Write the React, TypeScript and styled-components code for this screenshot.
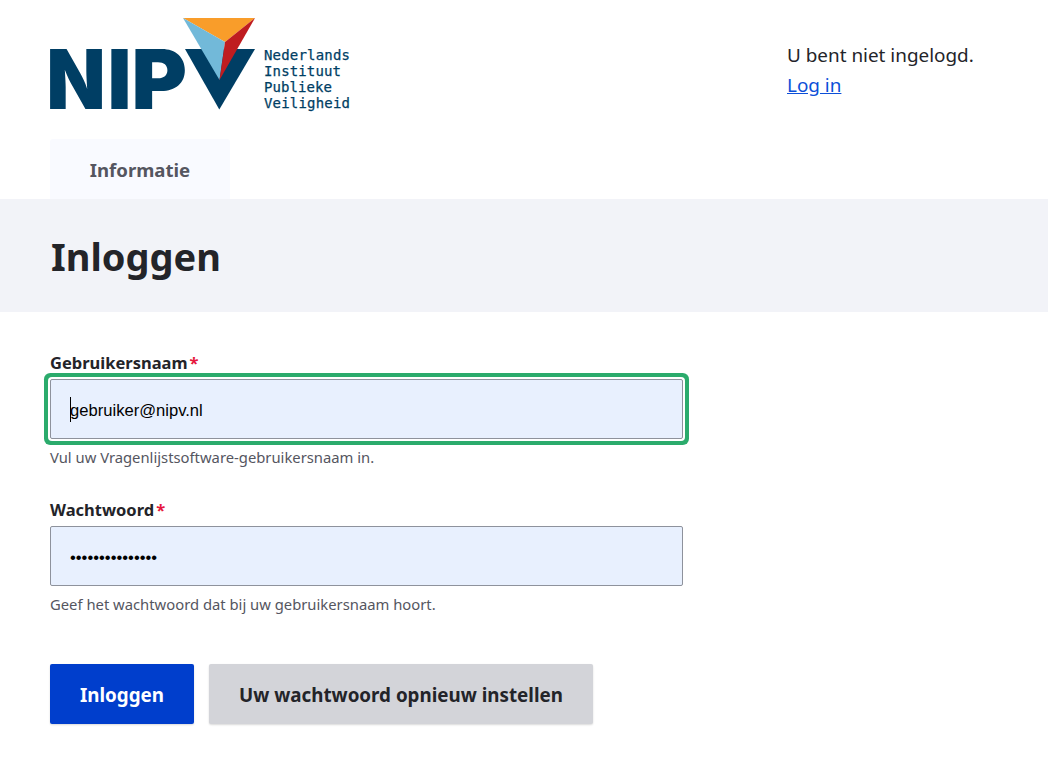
import styled, { createGlobalStyle } from 'styled-components'

const GlobalStyle = createGlobalStyle`
  html, body { margin: 0; padding: 0; background: #fff; }
  body { font-family: "Noto Sans", Arial, sans-serif; color: #232429; }
`

const Page = styled.div`
  width: 1048px;
  height: 768px;
  overflow: hidden;
`

const Header = styled.header`
  display: grid;
  grid-template-columns: 737px auto;
  padding: 18px 50px 0;
  height: 139px;
  box-sizing: border-box;
`

const UserBlock = styled.div`
  padding-top: 22px;
  font-size: 18.9px;
  line-height: 30px;
`

const UserLink = styled.a`
  display: block;
  color: #0b4fd8;
  text-decoration: underline;
`

const Tabs = styled.nav`
  display: flex;
  padding-left: 50px;
`

const Tab = styled.a`
  width: 180px;
  height: 60px;
  display: flex;
  align-items: center;
  justify-content: center;
  background: #f9faff;
  border-radius: 3px 3px 0 0;
  color: #55565f;
  font-weight: 700;
  font-size: 18.6px;
`

const TitleBand = styled.div`
  height: 113px;
  padding: 3px 0 0 51px;
  box-sizing: border-box;
  display: flex;
  align-items: center;
  background: #f2f3f8;
`

const Title = styled.h1`
  margin: 0;
  font-size: 38px;
  font-weight: 700;
  line-height: 1.2;
  color: #232429;
`

const Form = styled.form`
  padding: 39px 0 0 50px;
  width: 633px;
`

const Field = styled.div`
  margin-bottom: 31px;
`

const Label = styled.label`
  display: block;
  font-size: 16.5px;
  font-weight: 700;
  line-height: 24px;
  margin-bottom: 4px;
  color: #232429;
`

const Required = styled.span`
  color: #e6173d;
  margin-left: 2px;
`

const InputWrap = styled.div`
  position: relative;
  height: 60px;
`

const Input = styled.input<{ $focused?: boolean }>`
  display: block;
  width: 100%;
  height: 60px;
  box-sizing: border-box;
  padding: 4px 19px 0;
  background: #e8f0fe;
  border: 1px solid #8e929c;
  border-radius: 2px;
  font-family: "Liberation Sans", Arial, sans-serif;
  font-size: 16.6px;
  color: #000;
  outline: none;
  box-shadow: ${({ $focused }) => ($focused ? '0 0 0 2px #fff, 0 0 0 6px #2bab6c' : 'none')};
`

const Caret = styled.span`
  position: absolute;
  left: 20px;
  top: 18px;
  width: 1px;
  height: 25px;
  background: #000;
`

const Help = styled.div`
  margin-top: 8px;
  font-size: 14.8px;
  line-height: 20px;
  color: #55565f;
`

const Actions = styled.div`
  display: flex;
  gap: 15px;
  margin-top: 50px;
`

const ActionButton = styled.button<{ $primary?: boolean }>`
  height: 60px;
  padding: 2px 30px 0;
  border: none;
  border-radius: 2px;
  font-family: inherit;
  font-size: 18.8px;
  font-weight: 700;
  color: ${({ $primary }) => ($primary ? '#fff' : '#232429')};
  background: ${({ $primary }) => ($primary ? '#003ecc' : '#d3d4d9')};
  box-shadow: 0 1px 2px rgba(0, 0, 0, 0.15);
`

const LogoSvg = styled.svg`
  overflow: visible;
`

const LogoWord = styled.text`
  font-family: Inter, "Liberation Sans", sans-serif;
  font-size: 83px;
  font-weight: 900;
  fill: #003e64;
`

const LogoCaption = styled.text`
  font-family: "DejaVu Sans Mono", monospace;
  font-size: 14px;
  font-weight: 400;
  fill: #003e64;
  stroke: #003e64;
  stroke-width: 0.25px;
`

function Logo() {
  return (
    <LogoSvg width="301" height="92" viewBox="50 18 301 92" role="img" aria-label="NIPV">
      <LogoWord x="46.5" y="109" textLength="59" lengthAdjust="spacingAndGlyphs">N</LogoWord>
      <LogoWord x="107.5" y="109" textLength="24" lengthAdjust="spacingAndGlyphs">I</LogoWord>
      <LogoWord x="131.5" y="109" textLength="55.5" lengthAdjust="spacingAndGlyphs">P</LogoWord>
      <polygon points="185,49 255,49 219.3,109.5" fill="#003e64" />
      <polygon points="183,18 255,18 225,42" fill="#f99d2a" />
      <polygon points="183,18 225,42 219.5,80" fill="#72b9d9" />
      <polygon points="255,18 225,42 219.5,80" fill="#bf1c20" />
      <LogoCaption x="264" y="60" textLength="86">Nederlands</LogoCaption>
      <LogoCaption x="264" y="76" textLength="77">Instituut</LogoCaption>
      <LogoCaption x="264" y="92" textLength="68">Publieke</LogoCaption>
      <LogoCaption x="264" y="108" textLength="86">Veiligheid</LogoCaption>
    </LogoSvg>
  )
}

export default function App() {
  return (
    <Page>
      <GlobalStyle />
      <Header>
        <Logo />
        <UserBlock>
          U bent niet ingelogd.
          <UserLink href="#">Log in</UserLink>
        </UserBlock>
      </Header>
      <Tabs>
        <Tab>Informatie</Tab>
      </Tabs>
      <TitleBand>
        <Title>Inloggen</Title>
      </TitleBand>
      <Form onSubmit={e => e.preventDefault()}>
        <Field>
          <Label>
            Gebruikersnaam<Required>*</Required>
          </Label>
          <InputWrap>
            <Input $focused defaultValue="gebruiker@nipv.nl" />
            <Caret />
          </InputWrap>
          <Help>Vul uw Vragenlijstsoftware-gebruikersnaam in.</Help>
        </Field>
        <Field>
          <Label>
            Wachtwoord<Required>*</Required>
          </Label>
          <InputWrap>
            <Input type="password" defaultValue="gebruiker123456" />
          </InputWrap>
          <Help>Geef het wachtwoord dat bij uw gebruikersnaam hoort.</Help>
        </Field>
        <Actions>
          <ActionButton $primary>Inloggen</ActionButton>
          <ActionButton type="button">Uw wachtwoord opnieuw instellen</ActionButton>
        </Actions>
      </Form>
    </Page>
  )
}
